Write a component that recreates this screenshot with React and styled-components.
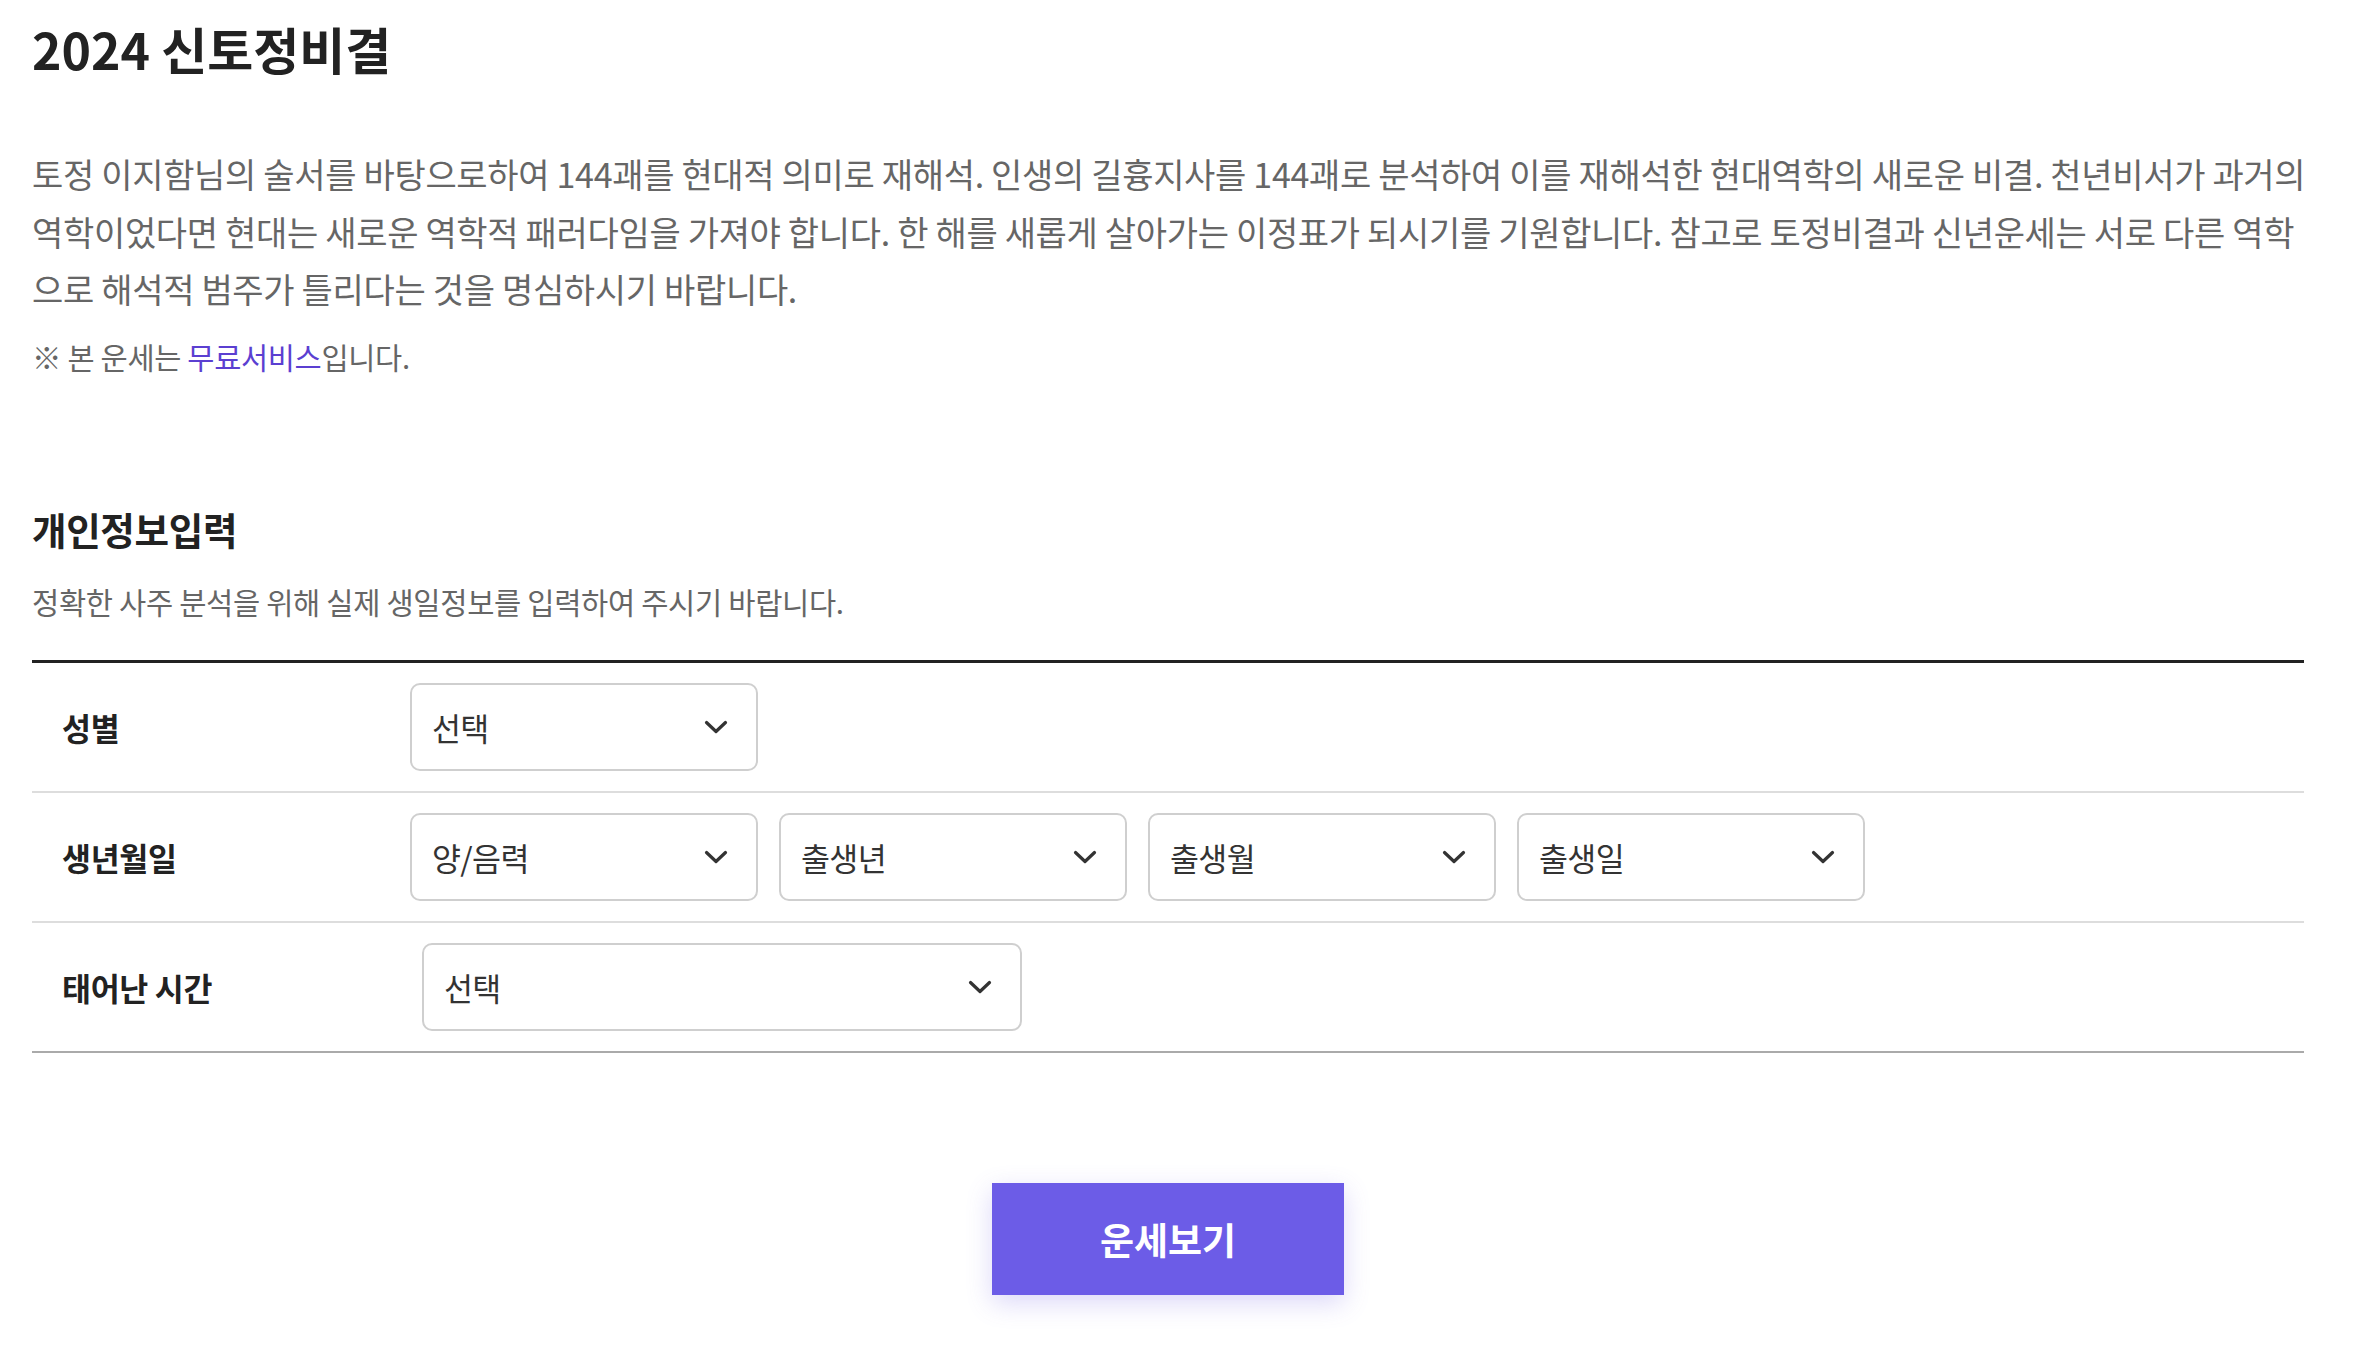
import React from 'react';
import styled, { createGlobalStyle } from 'styled-components';

const GlobalStyle = createGlobalStyle`
  html, body { margin: 0; padding: 0; background: #fff; }
  body {
    font-family: "Noto Sans CJK KR", "Noto Sans", sans-serif;
    color: #222;
    letter-spacing: -0.02em;
  }
  * { box-sizing: border-box; }
`;

const Page = styled.main`
  width: 2272px;
  margin-left: 32px;
  padding-top: 12px;
  padding-bottom: 60px;
`;

const Title = styled.h1`
  margin: 0;
  font-size: 50px;
  line-height: 72px;
  font-weight: 700;
  color: #222;
  letter-spacing: 0;
`;

const Intro = styled.p`
  margin: 61px 0 0;
  font-size: 34px;
  line-height: 57.6px;
  color: #666;
  white-space: nowrap;
`;

const Notice = styled.p`
  margin: 13px 0 0;
  font-size: 29.5px;
  line-height: 50px;
  color: #666;
`;

const Free = styled.span`
  color: #5b3fd1;
`;

const SectionTitle = styled.h2`
  margin: 122px 0 0;
  font-size: 37.5px;
  line-height: 52px;
  font-weight: 700;
  color: #222;
`;

const SectionDesc = styled.p`
  margin: 26px 0 0;
  font-size: 29.6px;
  line-height: 42px;
  color: #666;
`;

const Form = styled.div`
  margin-top: 37px;
  border-top: 3px solid #222;
`;

const Row = styled.div`
  display: flex;
  align-items: center;
  height: 130px;
  border-bottom: 2px solid #ddd;
  &:last-child {
    border-bottom-color: #aaa;
  }
`;

const Label = styled.div`
  flex: 0 0 378px;
  padding-left: 30px;
  font-size: 31.5px;
  font-weight: 700;
  color: #222;
`;

const Fields = styled.div`
  display: flex;
  gap: 21px;
  margin-left: ${(p) => p.$offset || 0}px;
`;

const SelectWrap = styled.div`
  position: relative;
  width: ${(p) => p.$width}px;
`;

const NativeSelect = styled.select`
  appearance: none;
  -webkit-appearance: none;
  display: block;
  width: 100%;
  height: 88px;
  padding: 0 64px 0 20px;
  border: 2px solid #cfcfcf;
  border-radius: 10px;
  background: #fff;
  font-family: inherit;
  font-size: 31.5px;
  letter-spacing: -0.02em;
  color: #333;
  outline: none;
`;

const Chevron = styled.svg`
  position: absolute;
  right: 30px;
  top: 50%;
  width: 24px;
  height: 14px;
  transform: translateY(-50%);
  pointer-events: none;
`;

const SubmitButton = styled.button`
  display: block;
  margin: 130px auto 0;
  width: 352px;
  height: 112px;
  border: none;
  background: #6c5ce7;
  color: #fff;
  font-family: inherit;
  font-size: 37px;
  font-weight: 700;
  letter-spacing: 0;
  box-shadow: 0 8px 24px rgba(108, 92, 231, 0.24);
  cursor: pointer;
`;

function Select({ width, placeholder }) {
  return (
    <SelectWrap $width={width}>
      <NativeSelect defaultValue="">
        <option value="">{placeholder}</option>
      </NativeSelect>
      <Chevron viewBox="0 0 24 14" fill="none">
        <polyline
          points="2.5,2.5 12,11.5 21.5,2.5"
          stroke="#333"
          strokeWidth="3.2"
          strokeLinecap="round"
          strokeLinejoin="round"
        />
      </Chevron>
    </SelectWrap>
  );
}

export default function App() {
  return (
    <>
      <GlobalStyle />
      <Page>
        <Title>2024 신토정비결</Title>
        <Intro>
          토정 이지함님의 술서를 바탕으로하여 144괘를 현대적 의미로 재해석. 인생의 길흉지사를 144괘로 분석하여 이를 재해석한 현대역학의 새로운 비결. 천년비서가 과거의
          <br />
          역학이었다면 현대는 새로운 역학적 패러다임을 가져야 합니다. 한 해를 새롭게 살아가는 이정표가 되시기를 기원합니다. 참고로 토정비결과 신년운세는 서로 다른 역학
          <br />
          으로 해석적 범주가 틀리다는 것을 명심하시기 바랍니다.
        </Intro>
        <Notice>
          ※ 본 운세는 <Free>무료서비스</Free>입니다.
        </Notice>

        <SectionTitle>개인정보입력</SectionTitle>
        <SectionDesc>정확한 사주 분석을 위해 실제 생일정보를 입력하여 주시기 바랍니다.</SectionDesc>

        <Form>
          <Row>
            <Label>성별</Label>
            <Fields>
              <Select width={348} placeholder="선택" />
            </Fields>
          </Row>
          <Row>
            <Label>생년월일</Label>
            <Fields>
              <Select width={348} placeholder="양/음력" />
              <Select width={348} placeholder="출생년" />
              <Select width={348} placeholder="출생월" />
              <Select width={348} placeholder="출생일" />
            </Fields>
          </Row>
          <Row>
            <Label>태어난 시간</Label>
            <Fields $offset={12}>
              <Select width={600} placeholder="선택" />
            </Fields>
          </Row>
        </Form>

        <SubmitButton type="button">운세보기</SubmitButton>
      </Page>
    </>
  );
}
